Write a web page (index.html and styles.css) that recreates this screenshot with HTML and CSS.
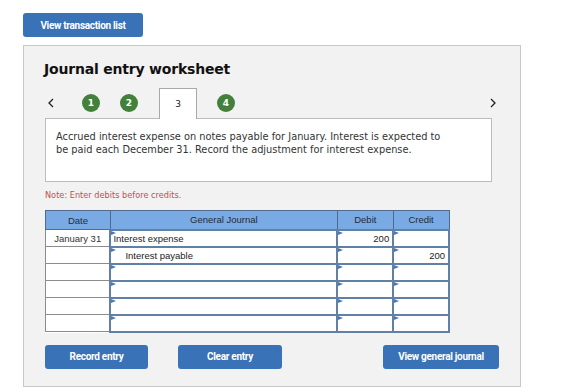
FILE: index.html
```html
<!DOCTYPE html>
<html lang="en">
<head>
    <meta charset="UTF-8">
    <meta name="viewport" content="width=device-width, initial-scale=1.0">
    <title>Journal entry worksheet</title>
    <link rel="stylesheet" href="styles.css">
</head>
<body>
    <div class="page">
        <button class="btn top-btn">View transaction list</button>

        <div class="worksheet">
            <h1>Journal entry worksheet</h1>

            <div class="steps">
                <svg class="chev" width="6" height="10" viewBox="0 0 6 10"><path d="M5 1 L1 5 L5 9" fill="none" stroke="#222" stroke-width="1.3"/></svg>
                <span class="step done first">1</span>
                <span class="step done">2</span>
                <span class="tab">3</span>
                <span class="step done">4</span>
                <svg class="chev next" width="6" height="10" viewBox="0 0 6 10"><path d="M1 1 L5 5 L1 9" fill="none" stroke="#222" stroke-width="1.3"/></svg>
            </div>

            <div class="task">
                Accrued interest expense on notes payable for January. Interest is expected to<br>
                be paid each December 31. Record the adjustment for interest expense.
            </div>

            <p class="note">Note: Enter debits before credits.</p>

            <table class="journal">
                <thead>
                    <tr>
                        <th class="c-date">Date</th>
                        <th class="c-acct">General Journal</th>
                        <th class="c-amt">Debit</th>
                        <th class="c-amt">Credit</th>
                    </tr>
                </thead>
                <tbody>
                    <tr>
                        <td class="date">January 31</td>
                        <td class="in">Interest expense</td>
                        <td class="in num">200</td>
                        <td class="in num"></td>
                    </tr>
                    <tr>
                        <td class="date"></td>
                        <td class="in indent">Interest payable</td>
                        <td class="in num"></td>
                        <td class="in num">200</td>
                    </tr>
                    <tr>
                        <td class="date"></td>
                        <td class="in"></td>
                        <td class="in num"></td>
                        <td class="in num"></td>
                    </tr>
                    <tr>
                        <td class="date"></td>
                        <td class="in"></td>
                        <td class="in num"></td>
                        <td class="in num"></td>
                    </tr>
                    <tr>
                        <td class="date"></td>
                        <td class="in"></td>
                        <td class="in num"></td>
                        <td class="in num"></td>
                    </tr>
                    <tr>
                        <td class="date"></td>
                        <td class="in"></td>
                        <td class="in num"></td>
                        <td class="in num"></td>
                    </tr>
                </tbody>
            </table>

            <div class="actions">
                <button class="btn record">Record entry</button>
                <button class="btn clear">Clear entry</button>
                <button class="btn view">View general journal</button>
            </div>
        </div>
    </div>
</body>
</html>
```

FILE: styles.css
```css
* {
    box-sizing: border-box;
}
body {
    font-family: "DejaVu Sans", Verdana, sans-serif;
    background-color: #fff;
    color: #222;
    margin: 0;
    padding: 0;
}
.page {
    padding: 13px 0 0 23px;
}
.btn {
    display: block;
    flex-shrink: 0;
    height: 24px;
    background-color: #3a72b8;
    color: white;
    border: none;
    border-radius: 3px;
    font-family: Roboto, "Liberation Sans", sans-serif;
    font-weight: bold;
    font-size: 10px;
    letter-spacing: -0.3px;
    padding: 0;
    cursor: pointer;
}
.top-btn {
    width: 120px;
}
.worksheet {
    width: 498px;
    height: 342px;
    margin-top: 8px;
    background: #f2f2f2;
    border: 1px solid #c8c8c8;
    padding: 14px 28px 0 21px;
}
h1 {
    margin: 0 0 0 -1px;
    font-size: 14px;
    line-height: 18px;
    font-weight: bold;
    color: #111;
    letter-spacing: -0.2px;
}
.steps {
    display: flex;
    align-items: center;
    height: 30px;
    margin-top: 10px;
    padding-left: 3px;
}
.chev.next {
    margin-left: auto;
    margin-right: -4px;
}
.step {
    width: 18px;
    height: 18px;
    border-radius: 50%;
    background: #43803b;
    color: white;
    font-size: 9px;
    font-weight: bold;
    display: flex;
    align-items: center;
    justify-content: center;
    margin-left: 20px;
}
.step.first {
    margin-left: 28px;
}
.tab {
    align-self: stretch;
    width: 38px;
    margin-left: 21px;
    margin-bottom: -1px;
    position: relative;
    z-index: 1;
    background: white;
    border: 1px solid #a8a8a8;
    border-bottom: none;
    font-size: 9px;
    display: flex;
    align-items: center;
    justify-content: center;
}
.tab + .step {
    margin-left: 20px;
}
.task {
    height: 64px;
    background: white;
    border: 1px solid #bcbcbc;
    padding: 11px 10px;
    font-size: 9.8px;
    line-height: 13px;
    color: #333;
    white-space: nowrap;
}
.note {
    margin: 8px 0 0;
    font-size: 8.2px;
    line-height: 10px;
    color: #c4504d;
}
.journal {
    margin-top: 10px;
    width: 405px;
    border-collapse: collapse;
    font-family: "Liberation Sans", Arial, sans-serif;
    font-size: 9.5px;
    background: white;
}
.journal th {
    height: 19px;
    background: #7aaae3;
    border: 1px solid #4f6a8c;
    color: #1e2a40;
    font-weight: normal;
    padding: 0;
}
.c-date { width: 65px; }
.c-acct { width: 228px; }
.c-amt { width: 56px; }
.journal td {
    height: 17px;
    padding: 0 2px;
    white-space: nowrap;
}
.journal td.date {
    border: 1px solid #8c8c8c;
    text-align: center;
    color: #333;
}
.journal td.in {
    position: relative;
    border: 2px solid #6180a6;
    color: #222;
}
.journal td.in::before {
    content: "";
    position: absolute;
    left: 0;
    top: 0;
    border-left: 5px solid #4a78b6;
    border-top: 2px solid transparent;
    border-bottom: 2px solid transparent;
}
.journal td.indent {
    padding-left: 14px;
}
.journal td.num {
    text-align: right;
    padding-right: 3px;
}
.actions {
    display: flex;
    margin-top: 12px;
}
.record {
    width: 103px;
}
.clear {
    width: 104px;
    margin-left: 30px;
}
.view {
    width: 116px;
    margin-left: 101px;
}
```
